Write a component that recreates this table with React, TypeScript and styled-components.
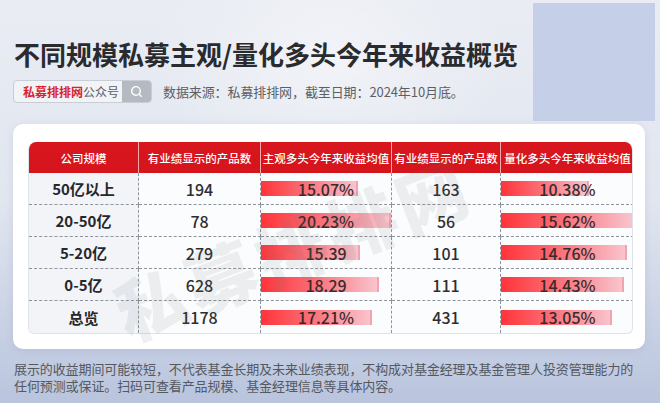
import styled, { createGlobalStyle } from "styled-components";
import { Search } from "lucide-react";

const GlobalStyle = createGlobalStyle`
  html, body {
    margin: 0;
    padding: 0;
  }
  body {
    font-family: "Noto Sans CJK SC", "Noto Sans", sans-serif;
  }
`;

type Row = {
  scale: string;
  subCount: string;
  subValue: number;
  subText: string;
  quantCount: string;
  quantValue: number;
  quantText: string;
};

const rows: Row[] = [
  { scale: "50亿以上", subCount: "194", subValue: 15.07, subText: "15.07%", quantCount: "163", quantValue: 10.38, quantText: "10.38%" },
  { scale: "20-50亿", subCount: "78", subValue: 20.23, subText: "20.23%", quantCount: "56", quantValue: 15.62, quantText: "15.62%" },
  { scale: "5-20亿", subCount: "279", subValue: 15.39, subText: "15.39", quantCount: "101", quantValue: 14.76, quantText: "14.76%" },
  { scale: "0-5亿", subCount: "628", subValue: 18.29, subText: "18.29", quantCount: "111", quantValue: 14.43, quantText: "14.43%" },
  { scale: "总览", subCount: "1178", subValue: 17.21, subText: "17.21%", quantCount: "431", quantValue: 13.05, quantText: "13.05%" },
];

const headers = [
  "公司规模",
  "有业绩显示的产品数",
  "主观多头今年来收益均值",
  "有业绩显示的产品数",
  "量化多头今年来收益均值",
];

const subMax = Math.max(...rows.map((r) => r.subValue));
const quantMax = Math.max(...rows.map((r) => r.quantValue));

const App = () => {
  return (
    <>
      <GlobalStyle />
      <Page>
        <Title>不同规模私募主观/量化多头今年来收益概览</Title>
        <InfoRow>
          <SearchBox>
            <SearchLabel>
              <Brand>私募排排网</Brand>公众号
            </SearchLabel>
            <SearchButton>
              <Search size={13} strokeWidth={2.6} color="#ffffff" />
            </SearchButton>
          </SearchBox>
          <Source>数据来源：私募排排网，截至日期：2024年10月底。</Source>
        </InfoRow>

        <Card>
          <Table>
            {headers.map((h, i) => (
              <HeaderCell key={i} $last={i === headers.length - 1}>
                {h}
              </HeaderCell>
            ))}
            {rows.map((r, i) => {
              const last = i === rows.length - 1;
              return [
                <ScaleCell key={`a${i}`} $last={last}>{r.scale}</ScaleCell>,
                <Cell key={`b${i}`} $last={last}>{r.subCount}</Cell>,
                <BarCell key={`c${i}`} $last={last}>
                  <Bar style={{ width: `${(r.subValue / subMax) * 100}%` }} />
                  <BarText>{r.subText}</BarText>
                </BarCell>,
                <Cell key={`d${i}`} $last={last}>{r.quantCount}</Cell>,
                <BarCell key={`e${i}`} $last={last} $end>
                  <Bar style={{ width: `${(r.quantValue / quantMax) * 100}%` }} />
                  <BarText>{r.quantText}</BarText>
                </BarCell>,
              ];
            })}
          </Table>
          <Watermark>私募排排网</Watermark>
        </Card>

        <Footer>
          展示的收益期间可能较短，不代表基金长期及未来业绩表现，不构成对基金经理及基金管理人投资管理能力的任何预测或保证。扫码可查看产品规模、基金经理信息等具体内容。
        </Footer>
      </Page>
    </>
  );
};

const Page = styled.div`
  width: 660px;
  height: 403px;
  box-sizing: border-box;
  padding: 37px 0 0 13px;
  overflow: hidden;
  background:
    linear-gradient(#c5cfe7, #c5cfe7) no-repeat 533px 3px / 122px 118px,
    radial-gradient(ellipse 260px 160px at 330px 60px, rgba(255, 255, 255, 0.45), rgba(255, 255, 255, 0) 70%),
    linear-gradient(180deg, #e9ecf3 0%, #e1e6ef 50%, #c9d2e5 80%, #b9c4dd 100%);
`;

const Title = styled.h1`
  margin: 0 0 0 1px;
  font-size: 26px;
  line-height: 34px;
  font-weight: 700;
  color: #2a2b2e;
  letter-spacing: 0;
`;

const InfoRow = styled.div`
  display: flex;
  align-items: center;
  gap: 11px;
  margin-top: 9px;
`;

const SearchBox = styled.div`
  display: flex;
  height: 23px;
  width: 139px;
  box-sizing: border-box;
  border: 1px solid #c9cdd5;
  border-radius: 4px;
  overflow: hidden;
  background: #f1f3f7;
`;

const SearchLabel = styled.div`
  flex: 1;
  display: flex;
  align-items: center;
  padding-left: 9px;
  font-size: 12px;
  color: #5a5d63;
  white-space: nowrap;
`;

const Brand = styled.span`
  color: #d8232b;
  font-weight: 700;
`;

const SearchButton = styled.div`
  width: 29px;
  display: flex;
  align-items: center;
  justify-content: center;
  background: #b4b9c2;
`;

const Source = styled.div`
  font-size: 13px;
  color: #5c5f66;
  letter-spacing: -0.1px;
`;

const Card = styled.div`
  position: relative;
  margin-top: 21px;
  width: 632px;
  height: 225px;
  box-sizing: border-box;
  padding: 18px 12px 17px 15px;
  background: #ffffff;
  border-radius: 10px;
  box-shadow: 0 2px 8px rgba(120, 135, 170, 0.18);
`;

const Table = styled.div`
  display: grid;
  grid-template-columns: 110px 122px 131px 109px 133px;
  grid-template-rows: 31px repeat(5, 32px);
  border: 1px solid #dfe3ea;
  border-top: none;
  border-radius: 8px 8px 6px 6px;
  overflow: hidden;
  background: #fbfcfd;
`;

const HeaderCell = styled.div<{ $last?: boolean }>`
  display: flex;
  align-items: center;
  justify-content: center;
  background: linear-gradient(180deg, #d8161e 0%, #d5141c 100%);
  color: #ffffff;
  font-size: 11.5px;
  font-weight: 500;
  white-space: nowrap;
  border-right: ${(p) => (p.$last ? "none" : "1px solid rgba(255, 220, 220, 0.75)")};
`;

const Cell = styled.div<{ $last?: boolean; $end?: boolean }>`
  display: flex;
  align-items: center;
  justify-content: center;
  font-size: 16px;
  font-weight: 500;
  color: #2e2e30;
  border-right: ${(p) => (p.$end ? "none" : "1px dashed #8e939c")};
  border-bottom: ${(p) => (p.$last ? "none" : "1px dashed #8e939c")};
`;

const ScaleCell = styled(Cell)`
  background: #f2f4f8;
  font-size: 15px;
  font-weight: 700;
  color: #26272a;
`;

const BarCell = styled(Cell)`
  position: relative;
  justify-content: flex-start;
`;

const Bar = styled.div`
  height: 15px;
  box-sizing: border-box;
  background: linear-gradient(90deg, #ff3438 0%, #fb6d76 45%, #f9c4cd 100%);
  border-right: 2px solid #f2a3b0;
`;

const BarText = styled.span`
  position: absolute;
  inset: 0;
  display: flex;
  align-items: center;
  justify-content: center;
  font-size: 16px;
  font-weight: 500;
  color: #3a2a2c;
`;

const Watermark = styled.div`
  position: absolute;
  left: 92px;
  top: 88px;
  font-size: 70px;
  font-weight: 900;
  letter-spacing: 5px;
  line-height: 1;
  color: rgba(110, 115, 125, 0.11);
  transform: rotate(-21deg);
  transform-origin: center;
  pointer-events: none;
  white-space: nowrap;
`;

const Footer = styled.p`
  margin: 11px 0 0 1px;
  width: 632px;
  font-size: 13px;
  line-height: 17px;
  color: #55585f;
  letter-spacing: -0.1px;
`;

export default App;
